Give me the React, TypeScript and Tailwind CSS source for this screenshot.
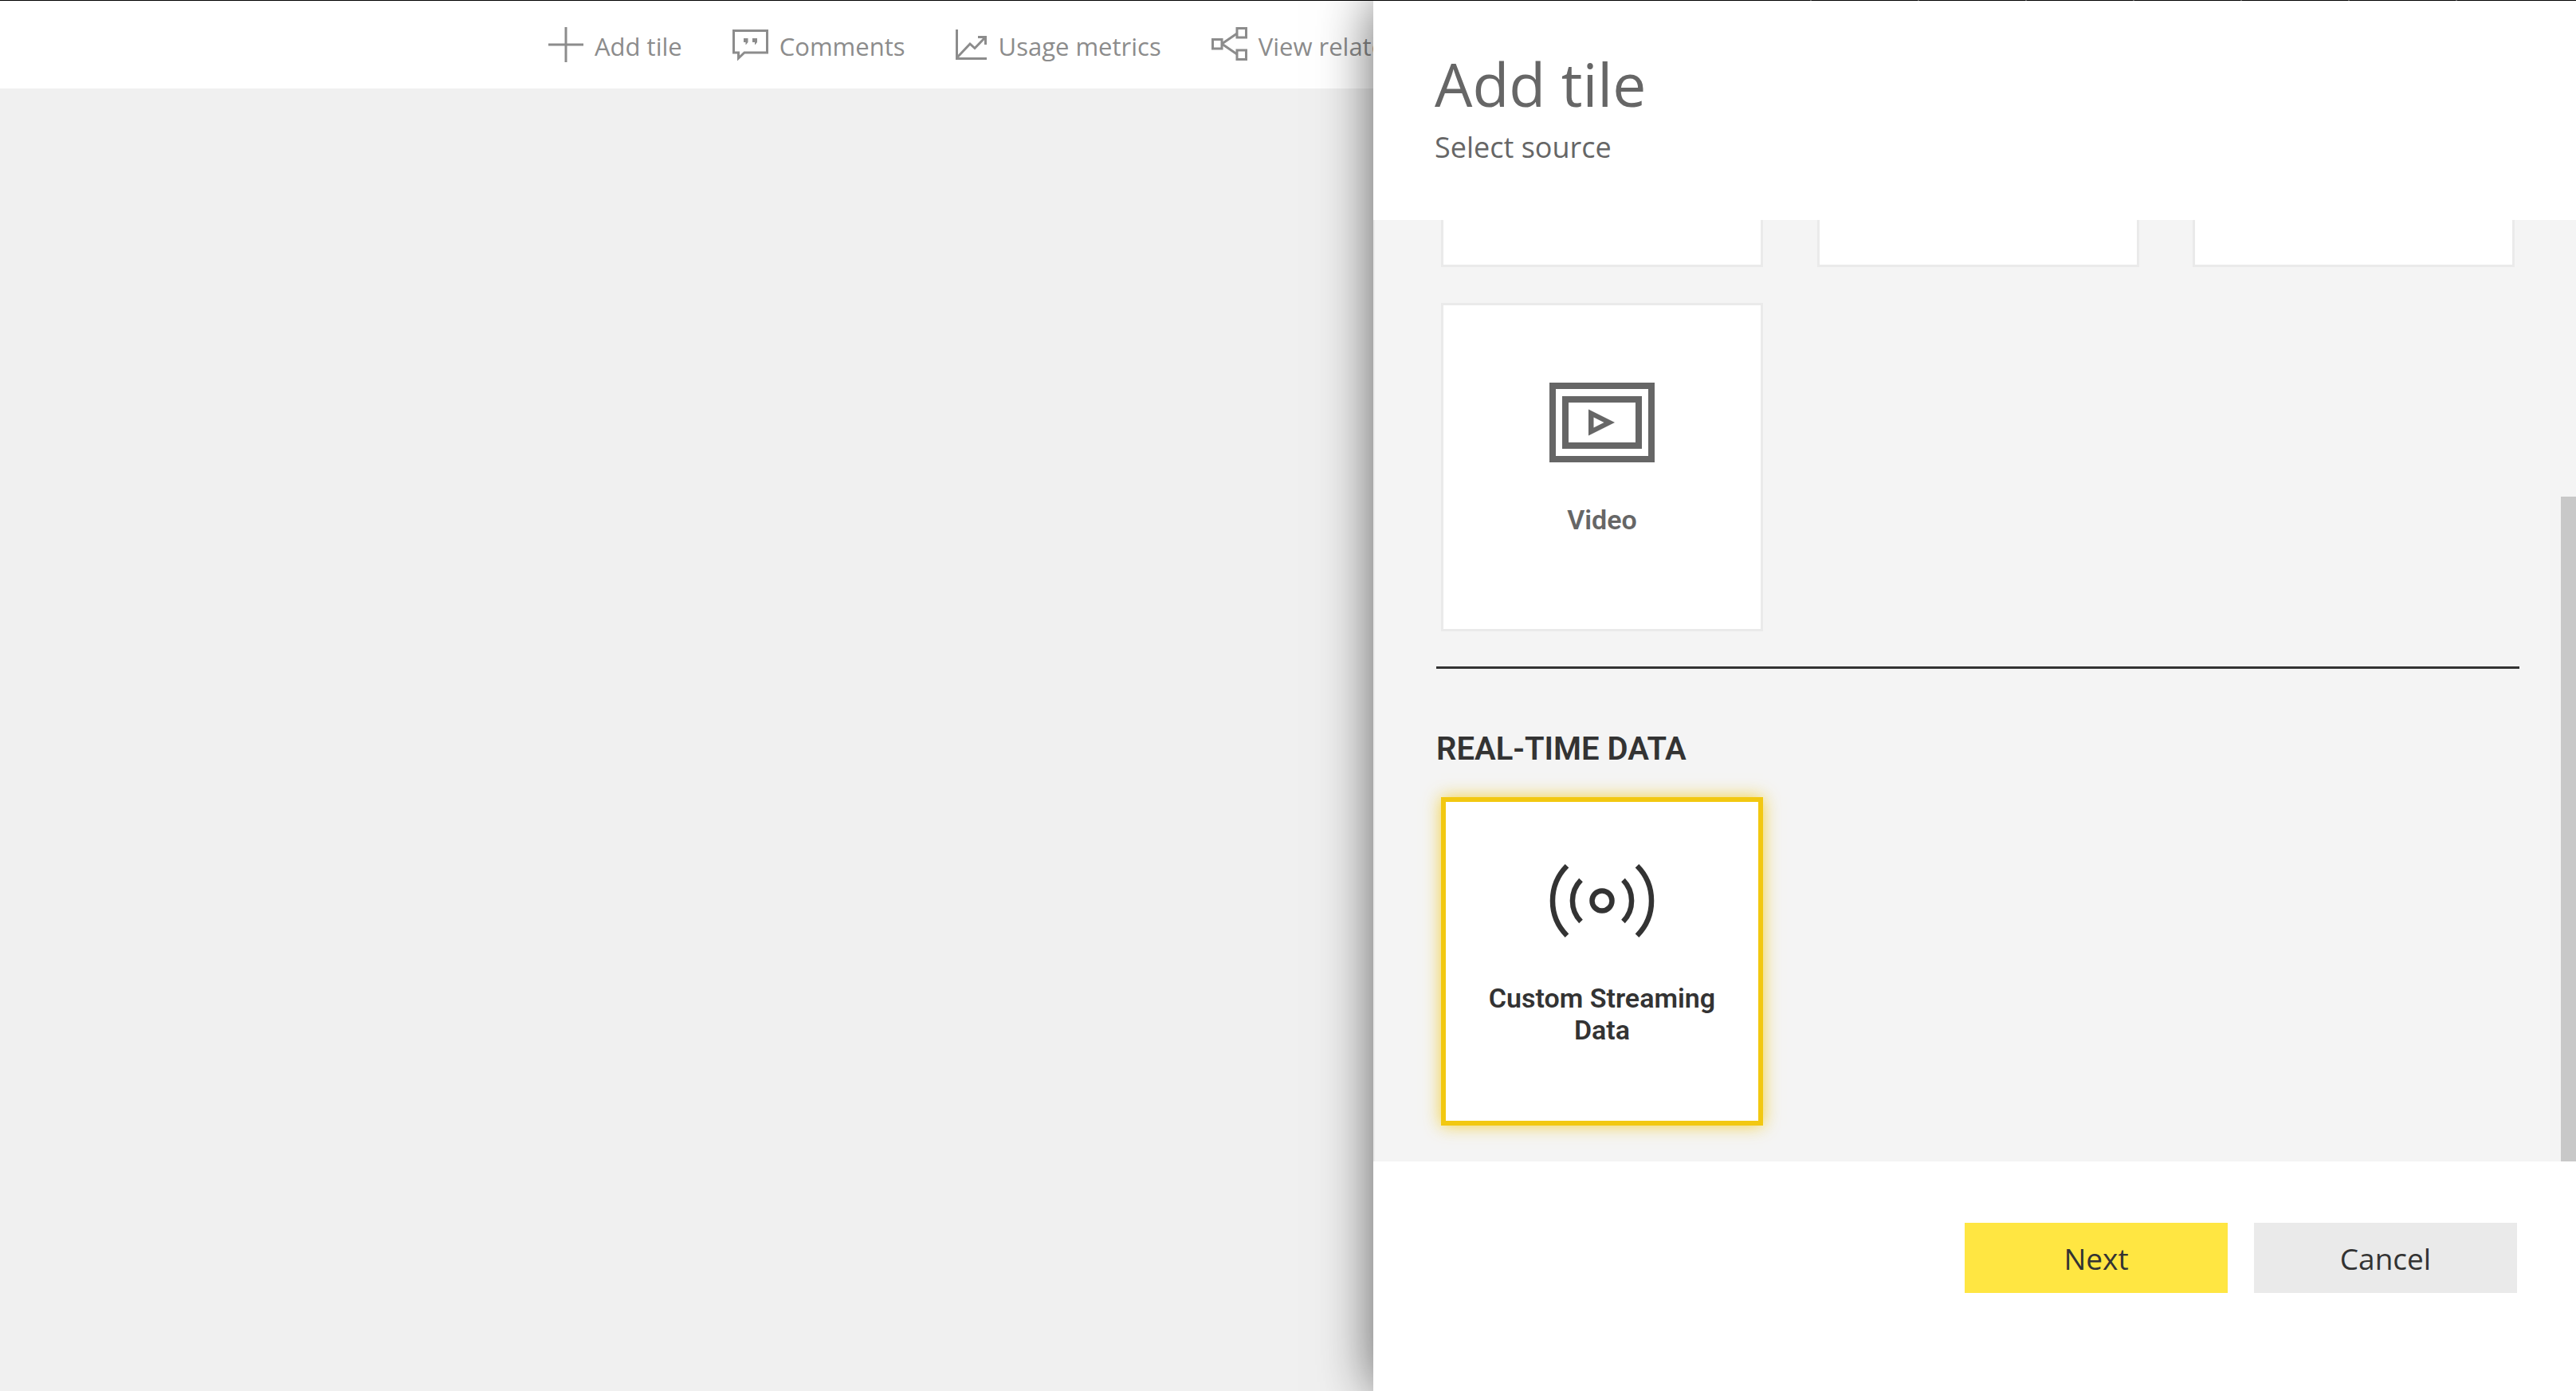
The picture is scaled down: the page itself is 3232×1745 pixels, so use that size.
import React from "react";

const PlusIcon = () => (
  <svg viewBox="0 0 44 44" className="h-11 w-11 shrink-0" fill="none" stroke="currentColor" strokeWidth="3" aria-hidden="true">
    <path d="M22 0V44M0 22H44" />
  </svg>
);

const CommentIcon = () => (
  <svg viewBox="0 0 45 44" className="h-11 w-[45px] shrink-0" fill="none" aria-hidden="true">
    <path d="M1.500 4.500H43.500V32H15L7.500 39V32H1.500Z" stroke="currentColor" strokeWidth="3" />
    <path d="M14 14H19.500V19L17 22H16.500V19H14ZM25 14H31V19L28.500 22H28V19H25Z" fill="currentColor" />
  </svg>
);

const MetricsIcon = () => (
  <svg viewBox="0 0 40 44" className="h-11 w-10 shrink-0" fill="none" stroke="currentColor" strokeWidth="3" aria-hidden="true">
    <path d="M1.500 3V39.500H39" />
    <path d="M2 38L18 21L24 26.500L37 13M28 12.500H37.500V22" />
  </svg>
);

const RelatedIcon = () => (
  <svg viewBox="0 0 45 44" className="h-11 w-[45px] shrink-0" fill="none" stroke="currentColor" strokeWidth="3" aria-hidden="true">
    <path d="M1.500 15.500H13V27H1.500ZM32 1.500H43.500V13H32ZM32 29H43.500V40.500H32Z" />
    <path d="M13 21L32 8M13 21L32 34" />
  </svg>
);

const VideoIcon = () => (
  <svg viewBox="0 0 132 100" className="h-[100px] w-[132px]" fill="none" stroke="currentColor" strokeWidth="8" aria-hidden="true">
    <rect x="4" y="4" width="124" height="92" />
    <rect x="20" y="21" width="92" height="58" />
    <path d="M49 33.500L82 50L49 66.500ZM55.500 43.500V56.500L68.500 50Z" fill="currentColor" fillRule="evenodd" stroke="none" />
  </svg>
);

const StreamIcon = () => (
  <svg viewBox="-66 -50 132 100" className="h-[100px] w-[132px]" fill="none" stroke="currentColor" strokeWidth="6.500" aria-hidden="true">
    <circle r="12.500" />
    <path d="M-44 -43.700A62 62 0 0 0 -44 43.700M44 -43.700A62 62 0 0 1 44 43.700" />
    <path d="M-26.500 -26A37.200 37.200 0 0 0 -26.500 26M26.500 -26A37.200 37.200 0 0 1 26.500 26" />
  </svg>
);

const actions = [
  { label: "Add tile", Icon: PlusIcon },
  { label: "Comments", Icon: CommentIcon },
  { label: "Usage metrics", Icon: MetricsIcon },
  { label: "View related", Icon: RelatedIcon },
];

const tabs = [0, 1, 2, 3, 4, 5, 6];

export default function App() {
  return (
    <div className="flex h-screen flex-col overflow-hidden bg-[#f0f0f0] font-['Open_Sans','Noto_Sans',sans-serif]">
      <div className="flex h-px shrink-0 justify-end gap-[133px] bg-black pr-[149px]">
        {tabs.map((t) => (
          <span key={t} className="w-0.5 bg-[#666666]" />
        ))}
      </div>
      <div className="flex min-h-0 flex-1">
        <main className="min-w-0 flex-1 overflow-hidden">
          <nav className="flex h-[110px] items-center gap-[63px] bg-white pl-[688px] text-[31px] leading-[44px] whitespace-nowrap text-[#8c8c8c]">
            {actions.map(({ label, Icon }) => (
              <button key={label} className="flex shrink-0 items-center gap-3.5">
                <Icon />
                <span className="pt-1">{label}</span>
              </button>
            ))}
          </nav>
        </main>

        <aside className="relative flex w-[1509px] max-w-full shrink-0 flex-col bg-white shadow-[0_0_64px_rgba(0,0,0,0.6)]">
          <header className="h-[275px] shrink-0 pt-[54px] pl-[77px] text-[#666666]">
            <h1 className="text-[75px] leading-[100px]">Add tile</h1>
            <p className="pt-1 text-[36px] leading-[52px]">Select source</p>
          </header>

          <div className="flex min-h-0 flex-1 justify-between border-l-2 border-[#eaeaea] bg-[#f4f4f4]">
            <div className="ml-[77px] w-[1359px]">
              <div className="grid grid-cols-[repeat(3,404px)] justify-between gap-y-[45px] px-1.5">
                <div className="h-[59px] border-3 border-t-0 border-[#eaeaea] bg-white" />
                <div className="h-[59px] border-3 border-t-0 border-[#eaeaea] bg-white" />
                <div className="h-[59px] border-3 border-t-0 border-[#eaeaea] bg-white" />
                <button className="flex h-[412px] flex-col items-center justify-center gap-[52px] border-3 border-[#eaeaea] bg-white pt-6 pb-11 text-[#666666]">
                  <VideoIcon />
                  <span className="font-[Roboto,sans-serif] text-[34px] leading-10 font-semibold">Video</span>
                </button>
              </div>
              <hr className="mt-11 border-t-3 border-[#333333]" />
              <h2 className="mt-[76px] font-[Roboto,sans-serif] text-[40px] leading-[50px] font-semibold text-[#333333]">
                REAL-TIME DATA
              </h2>
              <div className="px-1.5 pt-[35px]">
                <button className="flex h-[412px] w-[404px] flex-col items-center justify-center gap-[52px] border-6 border-[#f2c811] bg-white px-8 pt-6 pb-11 text-[#333333] shadow-[0_0_20px_rgba(242,200,17,0.8)]">
                  <StreamIcon />
                  <span className="font-[Roboto,sans-serif] text-[34px] leading-10 font-semibold">Custom Streaming Data</span>
                </button>
              </div>
            </div>
            <div className="flex w-[19px] flex-col justify-end">
              <div className="h-[834px] bg-[#c8c8c8]" />
            </div>
          </div>

          <footer className="flex h-[288px] shrink-0 items-start justify-end gap-[33px] pt-[77px] pr-[74px] text-[37px] leading-[52px] text-[#333333]">
            <button className="h-[88px] w-[330px] bg-[#ffe642] pt-0.5">Next</button>
            <button className="h-[88px] w-[330px] bg-[#eaeaea] pt-0.5">Cancel</button>
          </footer>
        </aside>
      </div>
    </div>
  );
}
